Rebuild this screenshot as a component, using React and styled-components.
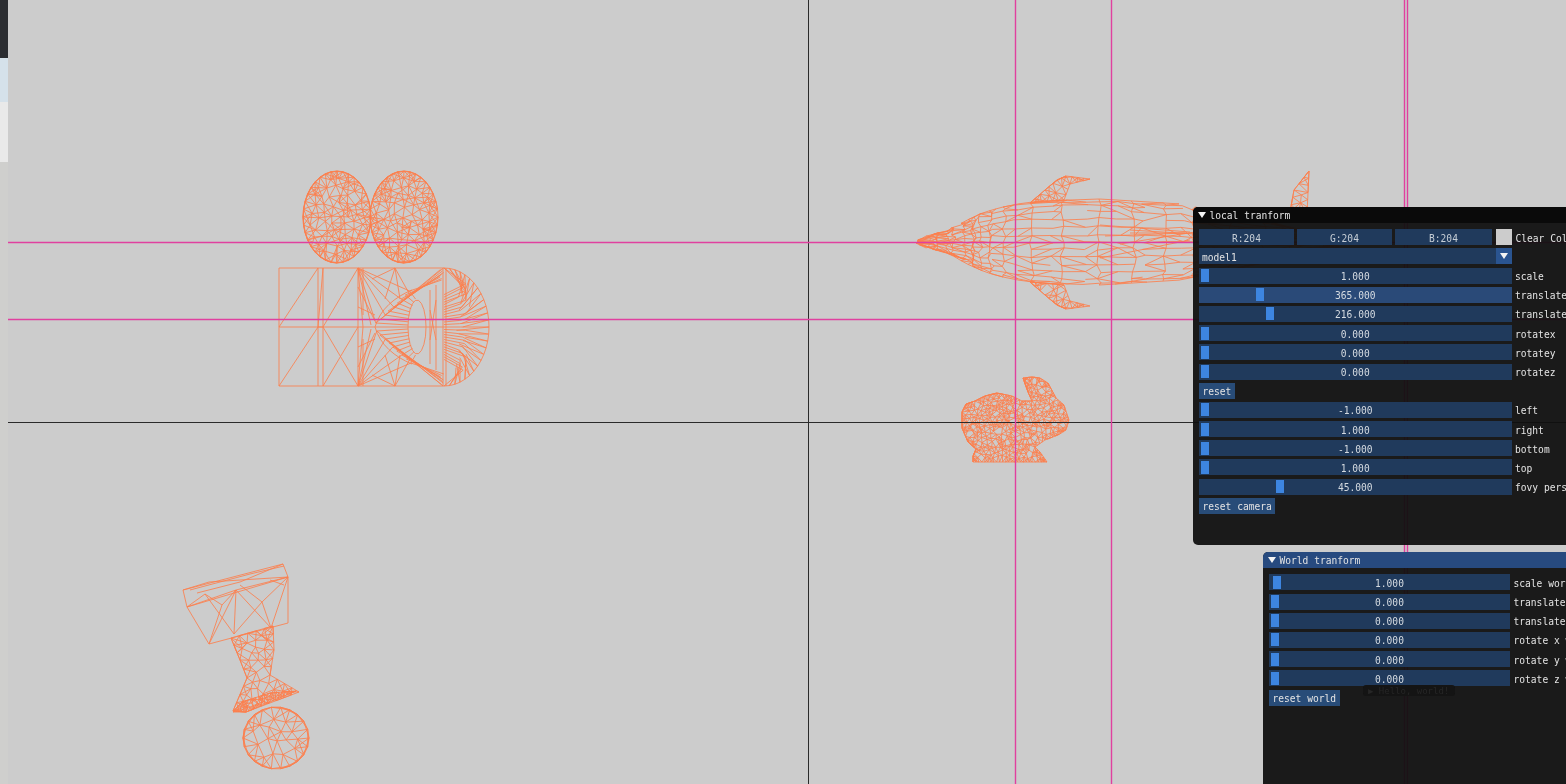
import React from "react";
import styled, { createGlobalStyle } from "styled-components";

const GlobalStyle = createGlobalStyle`
  html, body {
    margin: 0;
    height: 100%;
    overflow: hidden;
    background: #cccccc;
  }
`;

/* ---------- wireframe helpers ---------- */
const seeded = (seed) => () => {
  seed = (seed + 0x6d2b79f5) | 0;
  let t = Math.imul(seed ^ (seed >>> 15), 1 | seed);
  t = (t + Math.imul(t ^ (t >>> 7), 61 | t)) ^ t;
  return ((t ^ (t >>> 14)) >>> 0) / 4294967296;
};

const inside = (poly, x, y) => {
  let hit = false;
  for (let i = 0, j = poly.length - 1; i < poly.length; j = i++) {
    const [xi, yi] = poly[i];
    const [xj, yj] = poly[j];
    if (yi > y !== yj > y && x < ((xj - xi) * (y - yi)) / (yj - yi) + xi) hit = !hit;
  }
  return hit;
};

const ellipse = (cx, cy, rx, ry, n = 36) =>
  Array.from({ length: n }, (_, i) => {
    const a = (i / n) * Math.PI * 2;
    return [cx + Math.cos(a) * rx, cy + Math.sin(a) * ry];
  });

const outlinePath = (poly) =>
  "M" + poly.map(([x, y]) => `${x.toFixed(1)} ${y.toFixed(1)}`).join("L") + "Z";

const seg = (a, b) => `M${a[0].toFixed(1)} ${a[1].toFixed(1)}L${b[0].toFixed(1)} ${b[1].toFixed(1)}`;

// scatter vertices in an outline and join each to its nearest neighbours
const mesh = (poly, { gap, near = 5, step = 9, seed = 1, skip = 0 }) => {
  const rnd = seeded(seed);
  const pts = [];
  poly.forEach(([x, y], i) => {
    const [nx, ny] = poly[(i + 1) % poly.length];
    const len = Math.hypot(nx - x, ny - y);
    const parts = Math.max(1, Math.round(len / step));
    for (let k = 0; k < parts; k++) pts.push([x + ((nx - x) * k) / parts, y + ((ny - y) * k) / parts]);
  });
  const xs = poly.map((p) => p[0]);
  const ys = poly.map((p) => p[1]);
  const [x0, x1, y0, y1] = [Math.min(...xs), Math.max(...xs), Math.min(...ys), Math.max(...ys)];
  for (let i = 0; i < 6000; i++) {
    const x = x0 + rnd() * (x1 - x0);
    const y = y0 + rnd() * (y1 - y0);
    if (!inside(poly, x, y)) continue;
    if (pts.some((p) => Math.hypot(p[0] - x, p[1] - y) < gap)) continue;
    pts.push([x, y]);
  }
  const seen = new Set();
  let d = outlinePath(poly);
  pts.forEach((p, i) => {
    pts
      .map((q, j) => [Math.hypot(q[0] - p[0], q[1] - p[1]), j])
      .filter((e) => e[1] !== i)
      .sort((a, b) => a[0] - b[0])
      .slice(skip, near)
      .forEach(([, j]) => {
        const key = i < j ? `${i}-${j}` : `${j}-${i}`;
        if (seen.has(key)) return;
        seen.add(key);
        const q = pts[j];
        if (!inside(poly, (p[0] + q[0]) / 2, (p[1] + q[1]) / 2)) return;
        d += seg(p, q);
      });
  });
  return d;
};

/* ---------- models ---------- */
const blobs = () =>
  mesh(ellipse(337, 217, 34, 46), { gap: 6.5, near: 7, skip: 1, seed: 4 }) +
  mesh(ellipse(404, 217, 34, 46), { gap: 6.5, near: 7, skip: 1, seed: 9 });

const capsule = () => {
  const rnd = seeded(41);
  let d = "M279 268H444M279 386H444M279 268V386M318 268V386M323 268V386M358 268V386M279 327H358";
  d += "M279 327L318 268M279 386L318 327L323 327L358 268M323 386L358 327M323 327L358 386M318 327L323 268";
  d += "M443 268V386M446 268V386";

  // D shaped end cap: spokes running out from an uneven inner rim
  const cap = [];
  for (let i = 0; i <= 26; i++) {
    const a = -Math.PI / 2 + (i / 26) * Math.PI;
    cap.push([444 + Math.cos(a) * 45, 327 + Math.sin(a) * 59]);
  }
  d += "M" + cap.map((p) => p.map((v) => v.toFixed(1)).join(" ")).join("L");
  cap.forEach((p, i) => {
    const y = 327 + ((i - 13) / 13) * 54;
    const mid = [458 + rnd() * 9, 327 + (y - 327) * 0.8];
    d += seg(p, mid) + seg(mid, [444, y * 0.6 + 327 * 0.4]);
    if (i < 26) d += seg(p, [456 + rnd() * 14, 327 + ((i - 12) / 13) * 44]);
  });

  // heavy diagonal bands running in from the two right corners of the block
  [-1, 1].forEach((side) => {
    for (let i = 0; i < 9; i++) {
      const t = i / 8;
      const from = [444 - rnd() * 4, 327 + side * (59 - t * 12)];
      const to = [375 + t * 34 + rnd() * 2, 327 + side * (4 + t * 32)];
      d += seg(from, to);
      if (i % 2 === 0) d += seg([358, 327 + side * 59], to);
      d += seg(to, [417 + Math.cos(t * 1.4) * -9, 327 + side * (2 + t * 26)]);
    }
    d += seg([395, 327 + side * 59], [385, 327 + side * 28]);
    d += seg([395, 327 + side * 59], [400, 327 + side * 28]);
    d += seg([395, 327 + side * 59], [410, 327 + side * 32]);
    d += seg([395, 327 + side * 59], [372, 327 + side * 48]);
    d += seg([358, 327 + side * 59], [371, 327 + side * 2]);
    d += seg([358, 327 + side * 40], [375, 327 + side * 6]);
    d += seg([358, 327 + side * 20], [375, 327 + side * 12]);
    d += seg([363, 327 + side * 59], [363, 327 + side * 12]);
    d += seg([358, 327 + side * 59], [363, 327]);
  });
  d += "M375 327C380 309 395 297 412 290M375 327C380 345 395 357 412 364";
  d += outlinePath(ellipse(417, 327, 9, 27, 18));
  d += "M430 290V364M436 300L430 340M436 340L430 310M436 285V370";
  d += "M358 327H444";
  return d;
};

const dolphinHalf = (x) => {
  const table = [[919, 2], [922, 5], [935, 8], [950, 12], [965, 21], [985, 30], [1010, 37], [1040, 41], [1100, 43], [1180, 38], [1250, 24], [1340, 4]];
  for (let i = 1; i < table.length; i++) {
    if (x <= table[i][0]) {
      const [x0, h0] = table[i - 1];
      const [x1, h1] = table[i];
      return h0 + ((h1 - h0) * (x - x0)) / (x1 - x0);
    }
  }
  return 4;
};

const dolphin = () => {
  const rnd = seeded(21);
  let d = "";
  const stations = [];
  for (let x = 919; x <= 1340; x += x < 1000 ? 7 : 16) stations.push(x);
  const lats = [-1, -0.95, -0.86, -0.72, -0.55, -0.36, -0.16, 0, 0.16, 0.36, 0.55, 0.72, 0.86, 0.95, 1];
  const grid = stations.map((x) => {
    const wobble = (rnd() - 0.5) * 10;
    return lats.map((l) => [
      x + (Math.abs(l) < 1 ? wobble + (rnd() - 0.5) * 5 : 0),
      242 + dolphinHalf(x) * l + (Math.abs(l) < 1 ? (rnd() - 0.5) * 2.5 : 0),
    ]);
  });
  grid.forEach((col, i) => {
    col.forEach((p, j) => {
      if (j < col.length - 1 && (i % 2 === 0 || i < 10)) d += seg(p, col[j + 1]);
      if (i < grid.length - 1) {
        if (rnd() > 0.12) d += seg(p, grid[i + 1][j]);
        if (j < col.length - 1 && rnd() > 0.45) d += rnd() > 0.5 ? seg(p, grid[i + 1][j + 1]) : seg(col[j + 1], grid[i + 1][j]);
      }
    });
  });
  d += "M1105 236L1185 233M1120 244L1195 232M1100 225L1190 232M1100 258L1190 240M1130 233L1195 233M1130 230L1195 234";
  const finTop = [[1030, 203], [1045, 190], [1057, 180], [1066, 176], [1090, 179], [1070, 184], [1064, 200]];
  const finLow = finTop.map(([x, y]) => [x, 485 - y]);
  d += mesh(finTop, { gap: 6, near: 5, step: 6, seed: 31 });
  d += mesh(finLow, { gap: 6, near: 5, step: 6, seed: 32 });
  d += mesh([[1290, 212], [1294, 190], [1309, 171], [1307, 214]], { gap: 7, near: 4, step: 7, seed: 33 });
  return d;
};

const bunny = () =>
  mesh(
    [[973, 462], [973, 456], [976, 449], [968, 442], [962, 428], [962, 412], [966, 404], [975, 401], [985, 396], [997, 393], [1012, 396], [1022, 401], [1032, 401], [1028, 392], [1023, 378], [1032, 377], [1040, 378], [1048, 383], [1056, 398], [1064, 405], [1069, 420], [1066, 430], [1058, 435], [1045, 440], [1035, 447], [1040, 452], [1047, 462]],
    { gap: 3.2, near: 6, step: 3, seed: 12 }
  );

const goblet = () => {
  let d = "M183 590L283 564L288 577L187 607L183 590M187 607L209 644L288 623V577M183 590L209 582L288 577M197 593L240 582L283 564M190 590L250 574L284 566";
  d += "M187 607L236 590M187 607L205 594M205 594L222 605M222 605L209 644M222 605L236 590L234 634M205 594L234 634M236 590L271 628L288 577L236 590M236 590L209 644M288 577L262 602L271 628M262 602L234 634M262 602L240 585M270 580L284 585";
  d += mesh([[231, 638], [273, 626], [274, 650], [270, 675], [299, 692], [246, 712], [233, 711], [247, 678], [240, 660]], { gap: 6.5, near: 5, step: 8, seed: 17 });
  d += mesh([[242, 702], [270, 693], [296, 691], [270, 702], [246, 712], [233, 712]], { gap: 2.4, near: 4, step: 3, seed: 18 });
  d += mesh(ellipse(276, 738, 33, 31, 22), { gap: 9, near: 5, step: 9, seed: 19 });
  return d;
};

const wirePaths = [blobs(), capsule(), dolphin(), bunny(), goblet()];

/* ---------- page ---------- */
const Stage = styled.div`
  position: relative;
  display: flex;
  width: 100vw;
  height: 100vh;
  overflow: hidden;
  background: #cccccc;
  font-family: "DejaVu Sans Mono", "Liberation Mono", monospace;
  font-size: 9.6px;
  color: #e4e4e4;
`;

const Sliver = styled.div`
  flex: 0 0 8px;
  display: flex;
  flex-direction: column;
`;

const SliverBand = styled.div`
  flex: ${(p) => (p.$h ? `0 0 ${p.$h}px` : "1")};
  background: ${(p) => p.$color};
`;

const Canvas = styled.svg`
  flex: 0 0 1558px;
  display: block;
  height: 784px;
`;

const Wire = styled.g`
  fill: none;
  stroke: #fb7f4e;
  stroke-width: 0.85;
  filter: blur(0.25px);
`;

const Window = styled.section`
  position: absolute;
  left: ${(p) => p.$left}px;
  top: ${(p) => p.$top}px;
  width: 640px;
  height: ${(p) => p.$height}px;
  background: rgba(15, 15, 15, 0.94);
  border-radius: 5px 0 0 5px;
  filter: blur(0.3px);
`;

const TitleBar = styled.header`
  display: flex;
  align-items: center;
  gap: 3.5px;
  height: 15.5px;
  padding-left: 5px;
  background: ${(p) => (p.$active ? "#274a7f" : "#0a0a0a")};
  border-radius: 5px 0 0 0;
`;

const Caret = styled.span`
  width: 0;
  height: 0;
  border-left: 4px solid transparent;
  border-right: 4px solid transparent;
  border-top: 6.5px solid #f4f4f4;
`;

const Body = styled.div`
  display: flex;
  flex-direction: column;
  gap: 3.2px;
  padding: 6.7px 6px;
`;

const Row = styled.div`
  display: flex;
  align-items: center;
  gap: 3.5px;
  height: 16px;
  white-space: nowrap;
`;

// text in the reference sits a pixel under the centre of its box
const Label = styled.span`
  padding-top: 2px;
`;

const Bar = styled.div`
  position: relative;
  flex: 0 0 ${(p) => p.$width}px;
  height: 16px;
  display: flex;
  align-items: center;
  justify-content: center;
  background: ${(p) => (p.$hot ? "#2a4a78" : "#203a5c")};
  color: #d4dae0;
`;

const Grab = styled.i`
  position: absolute;
  left: ${(p) => p.$at}px;
  top: 1.5px;
  bottom: 1.5px;
  width: 8px;
  background: #3d85e0;
`;

const ColorFields = styled.div`
  flex: 0 0 293px;
  display: grid;
  grid-template-columns: 95px 95px 97px;
  gap: 3px;
`;

const ColorField = styled.div`
  height: 16px;
  display: flex;
  align-items: center;
  justify-content: center;
  background: #203a5c;
  color: #c6ced6;
`;

const Swatch = styled.div`
  flex: 0 0 16px;
  height: 16px;
  background: #cccccc;
  margin-left: 0.5px;
`;

const Combo = styled.div`
  flex: 0 0 ${(p) => p.$width}px;
  height: 16px;
  display: flex;
  align-items: center;
  justify-content: space-between;
  padding-left: 3px;
  box-sizing: border-box;
  background: #203a5c;
`;

const ComboArrow = styled.div`
  width: 16px;
  height: 16px;
  display: flex;
  align-items: center;
  justify-content: center;
  background: #2a5490;
`;

const Button = styled.button`
  height: 16px;
  padding: 2px 3.5px 0;
  border: 0;
  border-radius: 0;
  background: #284c78;
  color: #e4e4e4;
  font: inherit;
`;

const GhostWindow = styled.div`
  position: absolute;
  left: 100px;
  top: 133px;
  width: 92px;
  height: 11px;
  display: flex;
  align-items: center;
  padding-left: 5px;
  box-sizing: border-box;
  background: #141414;
  border-radius: 3px;
  color: #262626;
  font-size: 9px;
`;

const localRows = [
  { type: "slider", value: "1.000", label: "scale", at: 2 },
  { type: "slider", value: "365.000", label: "translate x", at: 57, hot: true },
  { type: "slider", value: "216.000", label: "translate y", at: 67 },
  { type: "slider", value: "0.000", label: "rotatex", at: 2 },
  { type: "slider", value: "0.000", label: "rotatey", at: 2 },
  { type: "slider", value: "0.000", label: "rotatez", at: 2 },
  { type: "button", label: "reset" },
  { type: "slider", value: "-1.000", label: "left", at: 2 },
  { type: "slider", value: "1.000", label: "right", at: 2 },
  { type: "slider", value: "-1.000", label: "bottom", at: 2 },
  { type: "slider", value: "1.000", label: "top", at: 2 },
  { type: "slider", value: "45.000", label: "fovy perspective", at: 77 },
  { type: "button", label: "reset camera" },
];

const worldRows = [
  { type: "slider", value: "1.000", label: "scale world", at: 4 },
  { type: "slider", value: "0.000", label: "translate x world", at: 2 },
  { type: "slider", value: "0.000", label: "translate y world", at: 2 },
  { type: "slider", value: "0.000", label: "rotate x world", at: 2 },
  { type: "slider", value: "0.000", label: "rotate y world", at: 2 },
  { type: "slider", value: "0.000", label: "rotate z world", at: 2 },
  { type: "button", label: "reset world" },
];

const Controls = ({ rows, barWidth }) =>
  rows.map((row) =>
    row.type === "button" ? (
      <Row key={row.label}>
        <Button>{row.label}</Button>
      </Row>
    ) : (
      <Row key={row.label}>
        <Bar $width={barWidth} $hot={row.hot}>
          <Grab $at={row.at} />
          <Label>{row.value}</Label>
        </Bar>
        <Label>{row.label}</Label>
      </Row>
    )
  );

export default function App() {
  return (
    <Stage>
      <GlobalStyle />
      <Sliver>
        <SliverBand $h={58} $color="#2b2d31" />
        <SliverBand $h={44} $color="#d5e1ea" />
        <SliverBand $h={60} $color="#e9e9e9" />
        <SliverBand $color="#cfcfcd" />
      </Sliver>
      <Canvas viewBox="8 0 1558 784">
        <Wire>
          {wirePaths.map((d, i) => (
            <path key={i} d={d} />
          ))}
        </Wire>
        <path d="M808.5 0V784M8 422.5H1566" fill="none" stroke="#2a2a2a" strokeWidth="1" />
        <path d="M8 242.5H1566M8 319.5H1566M1015.5 0V784M1111.5 0V784M1404.5 0V784M1407.5 0V784" fill="none" stroke="#e0409f" strokeWidth="1.4" />
      </Canvas>

      <Window $left={1193} $top={207} $height={338}>
        <TitleBar>
          <Caret />
          <Label>local tranform</Label>
        </TitleBar>
        <Body>
          <Row>
            <ColorFields>
              <ColorField><Label>R:204</Label></ColorField>
              <ColorField><Label>G:204</Label></ColorField>
              <ColorField><Label>B:204</Label></ColorField>
            </ColorFields>
            <Swatch />
            <Label>Clear Color</Label>
          </Row>
          <Row>
            <Combo $width={312.5}>
              <Label>model1</Label>
              <ComboArrow>
                <Caret />
              </ComboArrow>
            </Combo>
          </Row>
          <Controls rows={localRows} barWidth={312.5} />
        </Body>
      </Window>

      <Window $left={1263} $top={552.2} $height={240}>
        <TitleBar $active>
          <Caret />
          <Label>World tranform</Label>
        </TitleBar>
        <Body>
          <Controls rows={worldRows} barWidth={241} />
        </Body>
        <GhostWindow>▶ Hello, world!</GhostWindow>
      </Window>
    </Stage>
  );
}
